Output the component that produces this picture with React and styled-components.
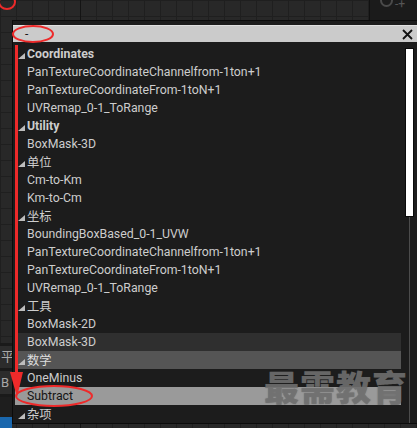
import React from 'react';
import styled, { createGlobalStyle } from 'styled-components';

const Global = createGlobalStyle`
  html, body { margin: 0; padding: 0; background: #262626; }
  body {
    width: 417px; height: 428px; overflow: hidden;
    font-family: Roboto, "Noto Sans CJK SC", sans-serif;
  }
`;

const Page = styled.div`
  position: relative;
  width: 417px;
  height: 428px;
  overflow: hidden;
  display: grid;
  grid-template-columns: 12px 1fr;
  background-color: #282828;
  background-image:
    linear-gradient(to right, transparent 80px, #141414 80px, #141414 81px, transparent 81px),
    linear-gradient(to right, #1f1f1f 1px, transparent 1px),
    linear-gradient(to bottom, #1f1f1f 1px, transparent 1px);
  background-size: 100% 100%, 16px 16px, 16px 16px;
  background-repeat: no-repeat, repeat, repeat;
`;

const SideColumn = styled.div`
  display: flex;
  flex-direction: column;
`;

const SideSpacer = styled.div`
  flex: 1;
`;

const SideRow = styled.div`
  height: ${p => p.h}px;
  background: ${p => p.bg};
  border-top: ${p => p.line ? '3px solid #1a1a1a' : 'none'};
  color: #a8a8a8;
  font-size: 13px;
  line-height: ${p => p.h}px;
  padding-left: 1px;
  white-space: nowrap;
  overflow: hidden;
`;

const BlueBar = styled.div`
  height: 11px;
  background: #1a67ad;
`;

const Canvas = styled.div`
  display: flex;
  flex-direction: column;
  align-items: flex-end;
`;

const CornerWidget = styled.div`
  width: 48px;
  height: 20px;
  background: #1b1b1b;
  border-left: 1px solid #111;
  display: flex;
  align-items: flex-start;
  gap: 2px;
  padding-left: 10px;
  box-sizing: border-box;
  overflow: hidden;
  color: #555;
  font-size: 12px;
  line-height: 8px;
`;

const Ring = styled.div`
  width: 9px;
  height: 9px;
  border: 2px solid #4a4a4a;
  border-radius: 50%;
  margin-top: -6px;
  flex: none;
`;

const Menu = styled.div`
  position: absolute;
  left: 12px;
  top: 20px;
  width: 405px;
  height: 404px;
  box-sizing: border-box;
  background: #1c1c1c;
  border-top: 1px solid #0b0b0b;
  border-left: 1px solid #0b0b0b;
  border-bottom: 1px solid #0b0b0b;
  display: flex;
  flex-direction: column;
`;

const SearchBar = styled.div`
  margin-top: 4px;
  height: 17px;
  background: #cbcbcb;
  border-top: 1px solid #e0e0e0;
  box-sizing: border-box;
  display: flex;
  align-items: center;
  padding-left: 12px;
  padding-right: 4px;
  color: #1a1a1a;
  font-size: 12px;
`;

const SearchText = styled.span`
  flex: 1;
`;

const Body = styled.div`
  margin-top: 3px;
  flex: 1;
  display: flex;
  gap: 3px;
  min-height: 0;
`;

const List = styled.div`
  margin-left: 2px;
  width: 386px;
  display: flex;
  flex-direction: column;
`;

const Row = styled.div`
  height: 18px;
  flex: none;
  display: flex;
  align-items: center;
  padding-left: ${p => p.cat ? '3px' : '12px'};
  gap: 2px;
  background: ${p => p.bg || 'transparent'};
  color: ${p => p.fg || '#cdcdcd'};
  font-size: 12.3px;
  font-weight: ${p => p.bold ? 700 : 400};
  white-space: nowrap;
`;

const Caret = styled.span`
  width: 0;
  height: 0;
  border-left: 7px solid transparent;
  border-bottom: 6px solid #bdbdbd;
  margin-top: 3px;
  flex: none;
`;

const ScrollColumn = styled.div`
  width: 10px;
  display: flex;
  flex-direction: column;
  align-items: center;
`;

const Thumb = styled.div`
  margin-top: 3px;
  width: 9px;
  height: 169px;
  background: #ffffff;
  border: 1px solid #0a0a0a;
  box-sizing: border-box;
  flex: none;
`;

const Track = styled.div`
  width: 1px;
  flex: 1;
  background: #4c4c4c;
`;

const Watermark = styled.div`
  position: absolute;
  left: 264px;
  top: 364px;
  font-family: "Noto Sans CJK SC", sans-serif;
  font-weight: 900;
  font-size: 35px;
  letter-spacing: 1px;
  line-height: 44px;
  color: rgba(118, 118, 118, 0.78);
  text-shadow: 0 0 1px rgba(60, 60, 60, 0.6);
  pointer-events: none;
`;

const Annotations = styled.svg`
  position: absolute;
  left: 0;
  top: 0;
  pointer-events: none;
`;

const rows = [
  { t: 'Coordinates', cat: true },
  { t: 'PanTextureCoordinateChannelfrom-1ton+1' },
  { t: 'PanTextureCoordinateFrom-1toN+1' },
  { t: 'UVRemap_0-1_ToRange' },
  { t: 'Utility', cat: true },
  { t: 'BoxMask-3D' },
  { t: '单位', cat: true, cjk: true },
  { t: 'Cm-to-Km' },
  { t: 'Km-to-Cm' },
  { t: '坐标', cat: true, cjk: true },
  { t: 'BoundingBoxBased_0-1_UVW' },
  { t: 'PanTextureCoordinateChannelfrom-1ton+1' },
  { t: 'PanTextureCoordinateFrom-1toN+1' },
  { t: 'UVRemap_0-1_ToRange' },
  { t: '工具', cat: true, cjk: true },
  { t: 'BoxMask-2D' },
  { t: 'BoxMask-3D', bg: '#2f2f2f' },
  { t: '数学', cat: true, cjk: true, bg: '#555555', fg: '#dedede' },
  { t: 'OneMinus' },
  { t: 'Subtract', bg: '#9a9a9a', fg: '#151515' },
  { t: '杂项', cat: true, cjk: true },
];

export default function App() {
  return (
    <>
      <Global />
      <Page>
        <SideColumn>
          <SideSpacer />
          <SideRow h={8} bg="transparent" />
          <SideRow h={22} bg="#2c2c2c" line>平</SideRow>
          <SideRow h={23} bg="#2c2c2c" line>B</SideRow>
          <SideRow h={20} bg="#1e1e1e" line />
          <BlueBar />
        </SideColumn>
        <Canvas>
          <CornerWidget>
            <Ring />
            <span>-+</span>
          </CornerWidget>
        </Canvas>

        <Menu>
          <SearchBar>
            <SearchText>-</SearchText>
            <svg width="11" height="11" viewBox="0 0 11 11">
              <path d="M1 1 L10 10 M10 1 L1 10" stroke="#111" strokeWidth="1.8" fill="none" />
            </svg>
          </SearchBar>
          <Body>
            <List>
              {rows.map((r, i) => (
                <Row key={i} cat={r.cat} bold={r.cat && !r.cjk} bg={r.bg} fg={r.fg}>
                  {r.cat && <Caret />}
                  <span>{r.t}</span>
                </Row>
              ))}
            </List>
            <ScrollColumn>
              <Thumb />
              <Track />
            </ScrollColumn>
          </Body>
        </Menu>

        <Watermark>最需教育</Watermark>

        <Annotations width="417" height="428" viewBox="0 0 417 428">
          <ellipse cx="7" cy="2" rx="8" ry="7" fill="none" stroke="#ee2a2a" strokeWidth="2" />
          <ellipse cx="33" cy="34" rx="20" ry="8" fill="none" stroke="#ee2a2a" strokeWidth="2" />
          <rect x="15" y="45" width="3" height="330" fill="#ee2a2a" />
          <polygon points="10,372 23,372 17,397" fill="#ee2a2a" />
          <ellipse cx="54" cy="396" rx="38" ry="10" fill="none" stroke="#ee2a2a" strokeWidth="2" />
        </Annotations>
      </Page>
    </>
  );
}
